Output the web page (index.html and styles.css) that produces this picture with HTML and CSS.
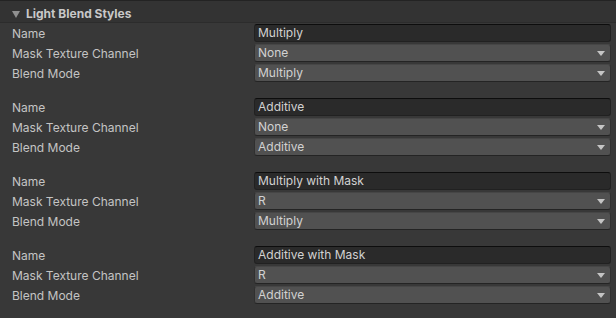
FILE: index.html
```html
<!DOCTYPE html>
<html lang="en">
<head>
  <meta charset="UTF-8">
  <title>Light Blend Styles</title>
  <link rel="stylesheet" href="styles.css">
</head>
<body>
  <div class="inspector">
    <div class="foldout">
      <span class="fold-arrow"></span>
      <span class="foldout-title">Light Blend Styles</span>
    </div>

    <div class="group">
      <div class="row"><span class="label">Name</span><div class="text-field">Multiply</div></div>
      <div class="row"><span class="label">Mask Texture Channel</span><div class="popup">None<span class="popup-arrow"></span></div></div>
      <div class="row"><span class="label">Blend Mode</span><div class="popup">Multiply<span class="popup-arrow"></span></div></div>
    </div>

    <div class="group">
      <div class="row"><span class="label">Name</span><div class="text-field">Additive</div></div>
      <div class="row"><span class="label">Mask Texture Channel</span><div class="popup">None<span class="popup-arrow"></span></div></div>
      <div class="row"><span class="label">Blend Mode</span><div class="popup">Additive<span class="popup-arrow"></span></div></div>
    </div>

    <div class="group">
      <div class="row"><span class="label">Name</span><div class="text-field">Multiply with Mask</div></div>
      <div class="row"><span class="label">Mask Texture Channel</span><div class="popup">R<span class="popup-arrow"></span></div></div>
      <div class="row"><span class="label">Blend Mode</span><div class="popup">Multiply<span class="popup-arrow"></span></div></div>
    </div>

    <div class="group">
      <div class="row"><span class="label">Name</span><div class="text-field">Additive with Mask</div></div>
      <div class="row"><span class="label">Mask Texture Channel</span><div class="popup">R<span class="popup-arrow"></span></div></div>
      <div class="row"><span class="label">Blend Mode</span><div class="popup">Additive<span class="popup-arrow"></span></div></div>
    </div>
  </div>
</body>
</html>
```

FILE: styles.css
```css
body {
  margin: 0;
  background-color: #383838;
  font-family: Inter, "Noto Sans", sans-serif;
  font-size: 12px;
  color: #c4c4c4;
}

.inspector {
  border-top: 1px solid #232323;
  display: flex;
  flex-direction: column;
  gap: 14px;
}

.foldout {
  box-sizing: border-box;
  height: 22px;
  padding-top: 4px;
  display: flex;
  align-items: center;
  gap: 6px;
  padding-left: 12px;
  background-color: #333333;
  border-bottom: 1px solid #2c2c2c;
  margin-bottom: -14px;
}

.fold-arrow {
  width: 0;
  height: 0;
  border-left: 4px solid transparent;
  border-right: 4px solid transparent;
  border-top: 7px solid #909090;
  margin-top: 1px;
}

.foldout-title {
  font-weight: bold;
  color: #c8c8c8;
}

.group {
  display: flex;
  flex-direction: column;
}

.row {
  height: 20px;
  display: flex;
  align-items: center;
}

.label {
  width: 242px;
  padding-left: 12px;
  flex-shrink: 0;
}

.text-field,
.popup {
  box-sizing: border-box;
  width: 357px;
  height: 18px;
  border-radius: 3px;
  padding-left: 3px;
  line-height: 16px;
  color: #d2d2d2;
  position: relative;
}

.text-field {
  background-color: #2a2a2a;
  border: 1px solid #212121;
  border-top-color: #0d0d0d;
}

.popup {
  background-color: #515151;
  border: 1px solid #303030;
  border-top-color: #464646;
  border-bottom-color: #242424;
}

.popup-arrow {
  position: absolute;
  right: 5px;
  top: 6px;
  width: 0;
  height: 0;
  border-left: 4px solid transparent;
  border-right: 4px solid transparent;
  border-top: 5px solid #c4c4c4;
}
```
